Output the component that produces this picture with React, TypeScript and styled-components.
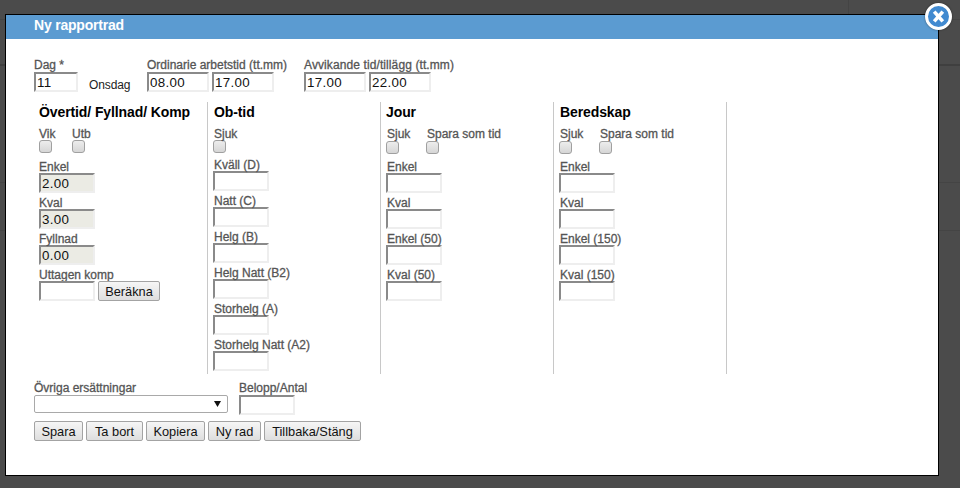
import React from "react";
import styled, { createGlobalStyle } from "styled-components";

const Global = createGlobalStyle`
  html, body { margin: 0; padding: 0; height: 100%; }
  body { background: #4b4b4b; overflow: hidden; font-family: "Liberation Sans", Arial, sans-serif; }
`;

const Page = styled.div`
  width: 960px;
  height: 488px;
  padding: 14px 0 0 5px;
  box-sizing: border-box;
  position: relative;
  background-color: #4b4b4b;
  background-image:
    linear-gradient(#444, #444),
    linear-gradient(#444, #444),
    linear-gradient(#3f3f3f, #3f3f3f),
    linear-gradient(#444, #444),
    linear-gradient(#444, #444);
  background-repeat: no-repeat;
  background-size: 100% 1px, 100% 1px, 100% 2px, 100% 1px, 1px 14px;
  background-position: 0 19px, 0 182px, 0 64px, 0 230px, 848px 0;
`;

const Modal = styled.div`
  width: 934px;
  height: 462px;
  box-sizing: border-box;
  border: 1px solid #000;
  background: #fff;
  position: relative;
`;

const Header = styled.div`
  height: 24px;
  background: #5b9bd1;
  color: #fff;
  font-size: 14px;
  font-weight: bold;
  letter-spacing: -0.2px;
  line-height: 21px;
  padding-left: 28px;
`;

const Close = styled.div`
  position: absolute;
  top: -12px;
  right: -14px;
  width: 27px;
  height: 27px;
  box-sizing: border-box;
  border-radius: 50%;
  border: 3px solid #fff;
  background: #418ad0;
  display: flex;
  align-items: center;
  justify-content: center;
  box-shadow: 0 0 2px rgba(0, 0, 0, 0.5);
`;

const Body = styled.div`
  padding: 19px 0 0 28px;
`;

const TopRow = styled.div`
  display: flex;
  align-items: flex-end;
  height: 34px;
`;

const Group = styled.div<{ $w: number }>`
  width: ${(p) => p.$w}px;
  flex: none;
`;

const Label = styled.div<{ $inset?: boolean; $spread?: boolean }>`
  font-size: 12px;
  line-height: 14px;
  color: #555;
  -webkit-text-stroke: 0.3px #555;
  white-space: nowrap;
  letter-spacing: ${(p) => (p.$spread ? 0.1 : 0)}px;
  margin-left: ${(p) => (p.$inset ? 1 : 0)}px;
`;

const Day = styled.div`
  font-size: 12px;
  color: #222;
  line-height: 14px;
  letter-spacing: -0.1px;
  width: 69px;
  padding: 0 0 0 11px;
  box-sizing: border-box;
  align-self: flex-end;
`;

const Input = styled.input<{ $w?: number; $ro?: boolean }>`
  display: block;
  width: ${(p) => p.$w ?? 56}px;
  height: 20px;
  box-sizing: border-box;
  border-style: solid;
  border-width: 2px;
  border-color: #8a8a8a #eee #eee #8a8a8a;
  background: ${(p) => (p.$ro ? "#ebebe4" : "#fff")};
  padding: 0 1px;
  margin: 0;
  font: 13.33px "Liberation Sans", Arial, sans-serif;
  letter-spacing: 0.3px;
  color: #111;
  outline: none;
`;

const InputRow = styled.div`
  display: flex;
  gap: 3px;
`;

const Columns = styled.div`
  display: grid;
  grid-template-columns: 174px 173px 173px 173px;
  margin-top: 10px;
  height: 271px;
`;

const Col = styled.div`
  box-sizing: border-box;
  border-right: 1px solid #c8c8c8;
  padding-left: 5px;
`;

const Title = styled.div<{ $inset?: boolean }>`
  font-size: 14px;
  font-weight: bold;
  letter-spacing: -0.1px;
  color: #000;
  line-height: 16px;
  height: 16px;
  margin-top: 2px;
  margin-bottom: 7px;
  margin-left: ${(p) => (p.$inset ? 1 : 0)}px;
  white-space: nowrap;
`;

const Checks = styled.div<{ $h: number }>`
  display: flex;
  height: ${(p) => p.$h}px;
`;

const Check = styled.div<{ $w: number }>`
  width: ${(p) => p.$w}px;
`;

const Box = styled.div<{ $lift?: boolean }>`
  width: 13px;
  height: 13px;
  box-sizing: border-box;
  margin-top: ${(p) => (p.$lift ? -1 : 0)}px;
  border: 1px solid #a0a0a0;
  border-radius: 3px;
  background: linear-gradient(#ededed, #d6d6d6);
`;

const Field = styled.div`
  height: 36px;

  ${Label} {
    height: 13px;
  }
`;

const FieldRow = styled.div`
  display: flex;
  gap: 3px;
`;

const Button = styled.button<{ $w: number }>`
  width: ${(p) => p.$w}px;
  height: 20px;
  box-sizing: border-box;
  border: 1px solid #a3a3a3;
  border-radius: 2px;
  background: linear-gradient(#f6f6f6, #dedede);
  color: #111;
  font: 12.8px "Liberation Sans", Arial, sans-serif;
  padding: 0;
  margin: 0;
`;

const Bottom = styled.div`
  display: flex;
  margin-top: 8px;
  height: 34px;
`;

const SelectBox = styled.div`
  width: 194px;
  height: 18px;
  box-sizing: border-box;
  border: 1px solid #a9a9a9;
  border-radius: 2px;
  position: relative;
`;

const Arrow = styled.svg`
  position: absolute;
  right: 6px;
  top: 5px;
`;

const Buttons = styled.div`
  display: flex;
  gap: 3px;
  margin-top: 6px;
`;

const Simple = ({ label, value, ro, inset }: { label: string; value?: string; ro?: boolean; inset?: boolean }) => (
  <Field>
    <Label $inset={inset}>{label}</Label>
    <Input $ro={ro} defaultValue={value} readOnly={ro} />
  </Field>
);

const CheckRow = ({ items, h, lift, inset }: { items: [string, number][]; h: number; lift?: boolean; inset?: boolean }) => (
  <Checks $h={h}>
    {items.map(([t, w]) => (
      <Check key={t} $w={w}>
        <Label $inset={inset}>{t}</Label>
        <Box $lift={lift} />
      </Check>
    ))}
  </Checks>
);

export default function App() {
  return (
    <Page>
      <Global />
      <Modal>
        <Header>Ny rapportrad</Header>
        <Close>
          <svg width="13" height="13" viewBox="0 0 13 13">
            <path d="M2.2 1.6L10.8 11.4M10.8 1.6L2.2 11.4" stroke="#fff" strokeWidth="3.6" />
          </svg>
        </Close>
        <Body>
          <TopRow>
            <Group $w={44}>
              <Label>Dag *</Label>
              <Input $w={44} defaultValue="11" />
            </Group>
            <Day>Onsdag</Day>
            <Group $w={157}>
              <Label>Ordinarie arbetstid (tt.mm)</Label>
              <InputRow>
                <Input $w={62} defaultValue="08.00" />
                <Input $w={62} defaultValue="17.00" />
              </InputRow>
            </Group>
            <Group $w={150}>
              <Label $spread>Avvikande tid/tillägg (tt.mm)</Label>
              <InputRow>
                <Input $w={62} defaultValue="17.00" />
                <Input $w={62} defaultValue="22.00" />
              </InputRow>
            </Group>
          </TopRow>
          <Columns>
            <Col>
              <Title>Övertid/ Fyllnad/ Komp</Title>
              <CheckRow h={33} lift items={[["Vik", 33], ["Utb", 40]]} />
              <Simple label="Enkel" value="2.00" ro />
              <Simple label="Kval" value="3.00" ro />
              <Simple label="Fyllnad" value="0.00" ro />
              <Field>
                <Label>Uttagen komp</Label>
                <FieldRow>
                  <Input />
                  <Button $w={62}>Beräkna</Button>
                </FieldRow>
              </Field>
            </Col>
            <Col>
              <Title $inset>Ob-tid</Title>
              <CheckRow h={31} lift inset items={[["Sjuk", 40]]} />
              <Simple inset label="Kväll (D)" />
              <Simple inset label="Natt (C)" />
              <Simple inset label="Helg (B)" />
              <Simple inset label="Helg Natt (B2)" />
              <Simple inset label="Storhelg (A)" />
              <Simple inset label="Storhelg Natt (A2)" />
            </Col>
            <Col>
              <Title>Jour</Title>
              <CheckRow h={33} inset items={[["Sjuk", 40], ["Spara som tid", 100]]} />
              <Simple inset label="Enkel" />
              <Simple inset label="Kval" />
              <Simple inset label="Enkel (50)" />
              <Simple inset label="Kval (50)" />
            </Col>
            <Col>
              <Title $inset>Beredskap</Title>
              <CheckRow h={33} inset items={[["Sjuk", 40], ["Spara som tid", 100]]} />
              <Simple inset label="Enkel" />
              <Simple inset label="Kval" />
              <Simple inset label="Enkel (150)" />
              <Simple inset label="Kval (150)" />
            </Col>
          </Columns>
          <Bottom>
            <Group $w={205}>
              <Label>Övriga ersättningar</Label>
              <SelectBox>
                <Arrow width="7" height="6" viewBox="0 0 7 6">
                  <path d="M0 0H7L3.5 6Z" fill="#111" />
                </Arrow>
              </SelectBox>
            </Group>
            <Group $w={60}>
              <Label>Belopp/Antal</Label>
              <Input />
            </Group>
          </Bottom>
          <Buttons>
            <Button $w={49}>Spara</Button>
            <Button $w={57}>Ta bort</Button>
            <Button $w={59}>Kopiera</Button>
            <Button $w={53}>Ny rad</Button>
            <Button $w={97}>Tillbaka/Stäng</Button>
          </Buttons>
        </Body>
      </Modal>
    </Page>
  );
}
